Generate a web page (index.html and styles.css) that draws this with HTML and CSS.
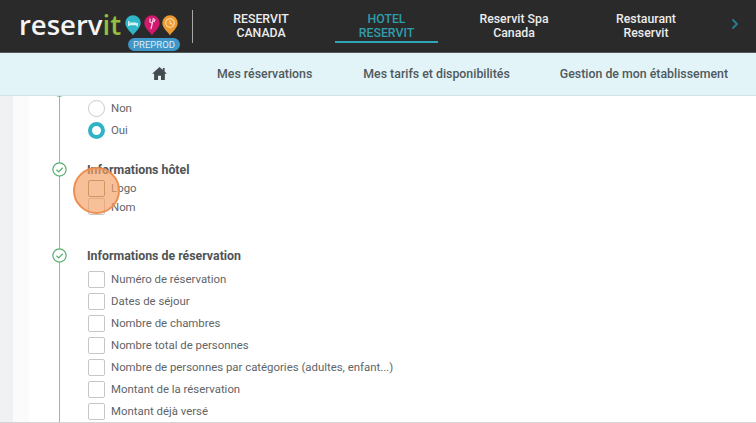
FILE: index.html
```html
<!DOCTYPE html>
<html lang="fr">
<head>
<meta charset="utf-8">
<title>Reservit</title>
<link rel="stylesheet" href="styles.css">
</head>
<body>
<header class="topbar">
  <div class="brand">
    <div class="logo-word">reserv<span class="logo-it">it</span></div>
    <div class="pins">
      <svg class="pin" viewBox="0 0 16 21"><path fill="#2fb6c9" d="M8 20.500C6.800 17.500.3 13.500.3 8A7.700 7.700 0 0 1 15.700 8c0 5.500-6.500 9.500-7.700 12.500z"/><path fill="none" stroke="#d8f3f6" stroke-width="1.500" d="M3.800 6v5M3.800 9.500h8.400M12.200 8v3.500"/><path fill="#d8f3f6" d="M5 7.500h6.500v2H5z"/></svg>
      <svg class="pin" viewBox="0 0 16 21"><path fill="#d0196f" d="M8 20.500C6.800 17.500.3 13.500.3 8A7.700 7.700 0 0 1 15.700 8c0 5.500-6.500 9.500-7.700 12.500z"/><path fill="none" stroke="#f6d5e4" stroke-width="1.200" d="M9.500 3L7 14M6 3.500v3.500l2 1M11 4l-1 3"/></svg>
      <svg class="pin" viewBox="0 0 16 21"><path fill="#ee9a33" d="M8 20.500C6.800 17.500.3 13.500.3 8A7.700 7.700 0 0 1 15.700 8c0 5.500-6.500 9.500-7.700 12.500z"/><circle cx="8" cy="8" r="4.300" fill="none" stroke="#fbdcae" stroke-width="1.100"/><path fill="none" stroke="#fbdcae" stroke-width="1.100" d="M8 5.500V8l2.500 1.500"/></svg>
    </div>
    <span class="badge">PREPROD</span>
  </div>
  <div class="divider"></div>
  <nav class="tabs">
    <a class="tab">RESERVIT<br>CANADA</a>
    <a class="tab tab-active">HOTEL<br>RESERVIT</a>
    <a class="tab">Reservit Spa<br>Canada</a>
    <a class="tab">Restaurant<br>Reservit</a>
  </nav>
  <svg class="chevron" viewBox="0 0 8 12"><path fill="none" stroke="#2a7f90" stroke-width="1.800" d="M1.500 1.500L6 6l-4.500 4.500"/></svg>
</header>
<nav class="subnav">
  <svg class="home" viewBox="0 0 16 14"><path fill="#444b4e" d="M8 0L0 7.200h2.200V14h4.200V9.400h3.200V14h4.200V7.200H16l-2.500-2.300V1h-2v2.100z"/></svg>
  <a class="sublink link-1">Mes réservations</a>
  <a class="sublink link-2">Mes tarifs et disponibilités</a>
  <a class="sublink">Gestion de mon établissement</a>
</nav>
<main class="page">
  <div class="gutter"></div>
  <div class="gutter-light"></div>
  <div class="content">
    <div class="rail"></div>
    <section class="group group-radio">
      <svg class="check check-clipped" viewBox="0 0 14 14"><circle cx="7" cy="7" r="6.200" fill="#fff" stroke="#54ad6c" stroke-width="1.100"/></svg>
      <label class="row"><span class="radio"></span>Non</label>
      <label class="row"><span class="radio radio-on"></span>Oui</label>
    </section>
    <section class="group group-hotel">
      <svg class="check" viewBox="0 0 14 14"><circle cx="7" cy="7" r="6.200" fill="#fff" stroke="#54ad6c" stroke-width="1.100"/><path fill="none" stroke="#54ad6c" stroke-width="1.100" d="M4.200 7.200l2 2 3.800-3.800"/></svg>
      <h3 class="title">Informations hôtel</h3>
      <label class="row row-logo"><span class="box box-focus"></span>Logo</label>
      <label class="row row-nom"><span class="box"></span>Nom</label>
      <span class="pulse"></span>
    </section>
    <section class="group group-resa">
      <svg class="check" viewBox="0 0 14 14"><circle cx="7" cy="7" r="6.200" fill="#fff" stroke="#54ad6c" stroke-width="1.100"/><path fill="none" stroke="#54ad6c" stroke-width="1.100" d="M4.200 7.200l2 2 3.800-3.800"/></svg>
      <h3 class="title">Informations de réservation</h3>
      <label class="row"><span class="box"></span>Numéro de réservation</label>
      <label class="row"><span class="box"></span>Dates de séjour</label>
      <label class="row"><span class="box"></span>Nombre de chambres</label>
      <label class="row"><span class="box"></span>Nombre total de personnes</label>
      <label class="row"><span class="box"></span>Nombre de personnes par catégories (adultes, enfant...)</label>
      <label class="row"><span class="box"></span>Montant de la réservation</label>
      <label class="row"><span class="box"></span>Montant déjà versé</label>
    </section>
  </div>
</main>
</body>
</html>
```
FILE: styles.css
```css
* { box-sizing: border-box; }
html, body { margin: 0; height: 423px; overflow: hidden; }
body { font-family: Roboto, "Liberation Sans", sans-serif; background: #fff; color: #5a5f62; }

.topbar { height: 53px; background: #2a2a2a; border-bottom: 1px solid #50585c; display: flex; align-items: flex-start; color: #f2f2f2; }
.brand { position: relative; width: 177px; height: 52px; padding: 10px 0 0 19px; display: flex; align-items: flex-start; }
.logo-word { font-family: "Open Sans", sans-serif; font-weight: 600; font-size: 27.500px; line-height: 30px; color: #f4f4f4; width: 106px; flex: none; white-space: nowrap; }
.logo-it { color: #93bf3e; }
.pins { display: flex; gap: 2.500px; margin-top: 5px; flex: none; }
.pin { width: 16px; height: 21px; display: block; }
.badge { position: absolute; left: 128px; top: 38px; height: 13px; width: 52px; border-radius: 7px; background: #3f96c8; color: #d9eef8; font-size: 9.500px; line-height: 13px; text-align: center; }
.divider { width: 1px; height: 33px; margin: 10px 0 0 15px; background: #a8a8a8; flex: none; }
.tabs { display: flex; margin-left: 8px; }
.tab { flex: none; height: 52px; padding-top: 12px; font-size: 12.300px; font-weight: 500; line-height: 14px; text-align: center; color: #ececec; }
.tab:nth-child(1) { width: 120px; margin-right: 14px; }
.tab:nth-child(2) { width: 103px; margin-right: 12px; height: 43px; border-bottom: 2px solid #2fa4b5; color: #2f9dac; }
.tab:nth-child(3) { width: 128px; margin-right: 4px; }
.tab:nth-child(4) { width: 128px; }
.chevron { width: 8px; height: 12px; margin: 18px 0 0 21px; flex: none; }

.subnav { height: 43px; background: #e2f4f8; border-bottom: 1px solid #cfe4ea; display: flex; align-items: center; padding: 0 0 1px 152px; }
.home { width: 15px; height: 13px; margin-right: 50px; flex: none; }
.sublink { font-size: 12.350px; font-weight: 500; color: #50595d; white-space: nowrap; }
.link-1 { margin-right: 51px; }
.link-2 { margin-right: 50px; }

.page { height: 327px; display: flex; border-bottom: 1px solid #d5d5d5; overflow: hidden; }
.gutter { width: 13px; background: #f0f1f2; flex: none; }
.gutter-light { width: 16px; background: #fbfbfb; flex: none; }
.content { position: relative; flex: 1; padding-left: 59px; }
.rail { position: absolute; left: 30px; top: 0; bottom: 0; width: 1px; background: #a9adaf; }
.group { position: relative; }
.group-radio { padding-top: 1px; }
.group-hotel { margin-top: 20px; }
.group-resa { margin-top: 31px; }
.row { display: flex; align-items: center; gap: 6px; height: 22px; font-size: 11.400px; color: #5f6467; white-space: nowrap; }
.row-logo { height: 18px; }
.row-nom { height: 19px; }
.title { margin: 0 0 0 -1px; height: 18px; font-size: 12.350px; line-height: 18px; font-weight: 700; color: #4f5356; }
.group-resa .title { margin-bottom: 3px; }
.radio { width: 17px; height: 17px; border-radius: 50%; border: 1px solid #c9c9c9; background: #fff; flex: none; }
.radio-on { border: 4px solid #2fb3c6; }
.box { width: 17px; height: 17px; border: 1px solid #c6c6c6; border-radius: 2px; background: #fff; flex: none; }
.box-focus { border-color: #7d8a60; }
.check { position: absolute; left: -36px; top: 1px; width: 15px; height: 15px; }
.check-clipped { top: -14px; }
.pulse { position: absolute; left: -15px; top: 6px; width: 47px; height: 47px; border-radius: 50%; background: rgba(245, 160, 100, 0.66); border: 2px solid #ee8f50; }
```
